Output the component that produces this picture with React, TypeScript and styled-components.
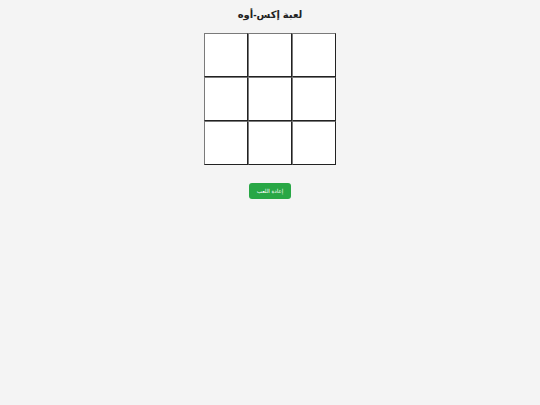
import React, { useState } from "react";
import styled, { createGlobalStyle } from "styled-components";

const GlobalStyle = createGlobalStyle`
  html, body {
    margin: 0;
    padding: 0;
    background: #f4f4f4;
    font-family: "Liberation Sans", "DejaVu Sans", "Noto Sans", sans-serif;
  }
`;

const Page = styled.div`
  display: flex;
  flex-direction: column;
  align-items: center;
  padding-top: 8px;
  direction: rtl;
`;

const Title = styled.h1`
  margin: 0 0 11px 0;
  font-size: 10px;
  line-height: 14px;
  font-weight: bold;
  color: #222;
`;

const Board = styled.div`
  display: grid;
  grid-template-columns: repeat(3, 44px);
  grid-template-rows: repeat(3, 44px);
  direction: ltr;
`;

const Cell = styled.button`
  box-sizing: border-box;
  width: 44px;
  height: 44px;
  padding: 0;
  margin: 0;
  background: #fff;
  border-style: solid;
  border-width: 1px;
  border-color: #7a7a7a #222 #222 #7a7a7a;
  font-family: inherit;
  font-size: 24px;
  font-weight: bold;
  color: #333;
  cursor: pointer;
`;

const ResetButton = styled.button`
  margin-top: 18px;
  height: 16px;
  width: 42px;
  padding: 0;
  border: none;
  border-radius: 3px;
  background: #28a745;
  color: #fff;
  font-family: inherit;
  font-size: 5.5px;
  cursor: pointer;
`;

export default function App() {
  const [cells, setCells] = useState<string[]>(Array(9).fill(""));
  const [turn, setTurn] = useState("X");

  const play = (i: number) => {
    if (cells[i]) return;
    const next = [...cells];
    next[i] = turn;
    setCells(next);
    setTurn(turn === "X" ? "O" : "X");
  };

  return (
    <>
      <GlobalStyle />
      <Page>
        <Title>لعبة إكس-أوه</Title>
        <Board>
          {cells.map((c, i) => (
            <Cell key={i} onClick={() => play(i)}>
              {c}
            </Cell>
          ))}
        </Board>
        <ResetButton
          onClick={() => {
            setCells(Array(9).fill(""));
            setTurn("X");
          }}
        >
          إعادة اللعب
        </ResetButton>
      </Page>
    </>
  );
}
